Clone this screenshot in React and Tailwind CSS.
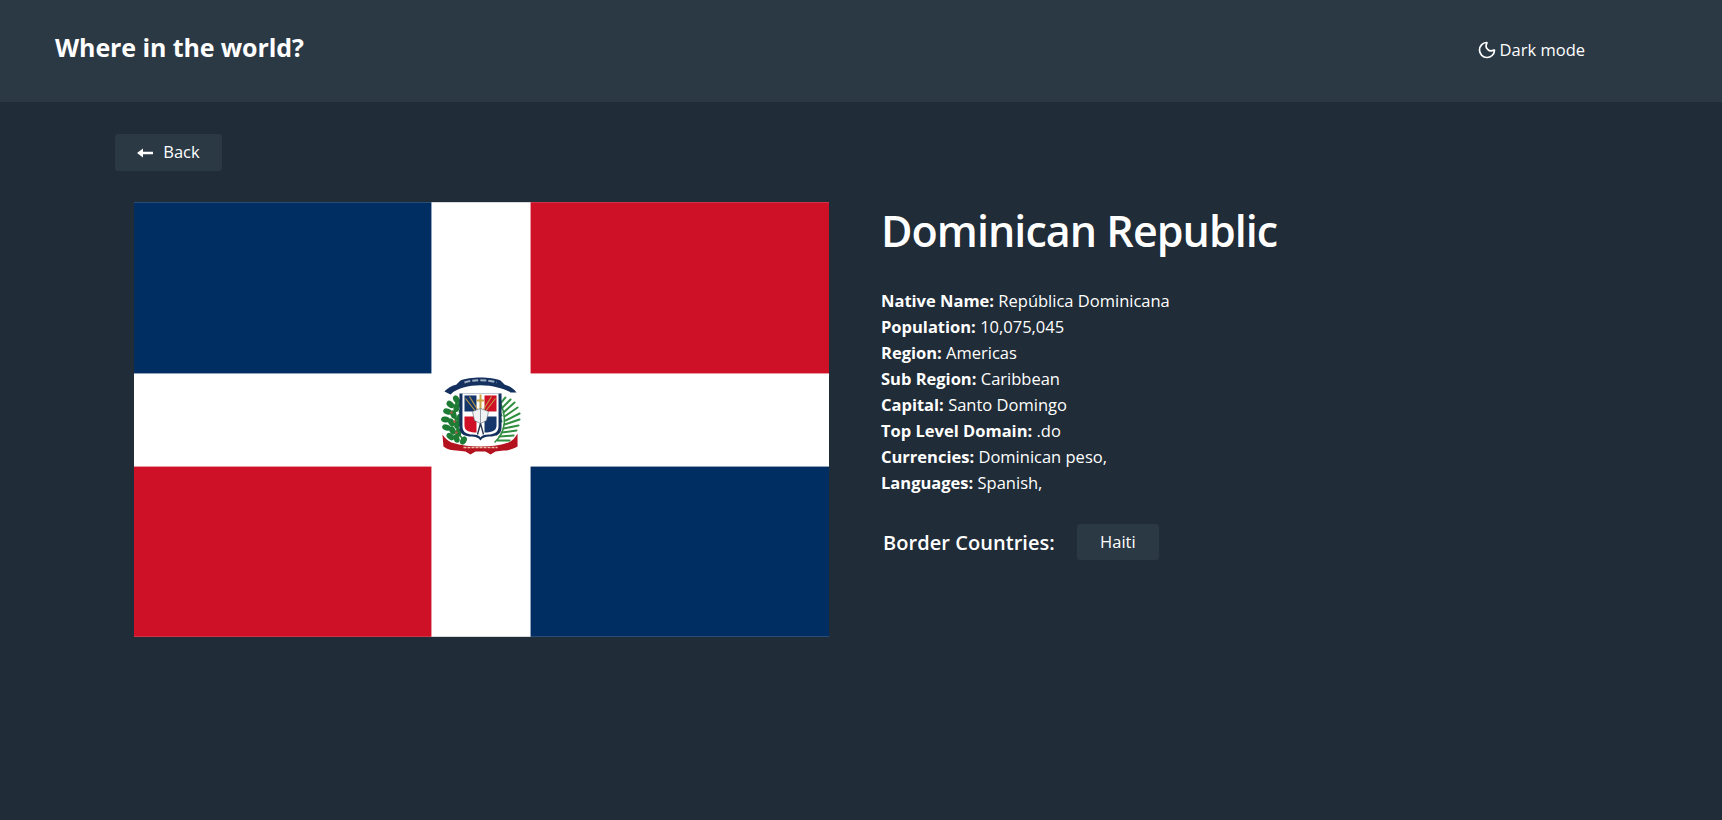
import { Moon } from 'lucide-react';

const DETAILS = [
  ['Native Name:', 'República Dominicana'],
  ['Population:', '10,075,045'],
  ['Region:', 'Americas'],
  ['Sub Region:', 'Caribbean'],
  ['Capital:', 'Santo Domingo'],
  ['Top Level Domain:', '.do'],
  ['Currencies:', 'Dominican peso,'],
  ['Languages:', 'Spanish,'],
];

// leaf positions on the left branch of the coat of arms: x, y, angle
const LAUREL = [
  [17, 25, -30], [22, 29, 30], [11, 30, -50], [17, 33, 10], [23, 36, 40],
  [8, 37, -70], [14, 40, -20], [20, 43, 30], [6, 45, -80], [12, 48, -30],
  [18, 50, 20], [7, 53, -70], [13, 56, -30], [19, 58, 10], [11, 62, -50], [17, 64, -20], [24, 66, 30],
];

// fronds on the right branch: start on the stem, end on the outside
const PALM = [
  [58, 66, 70, 66], [60, 62, 74, 61], [62, 58, 77, 56], [64, 54, 79, 51], [65, 50, 80, 45],
  [66, 46, 80, 39], [65, 42, 78, 33], [64, 38, 75, 28], [62, 34, 71, 25], [60, 30, 66, 23],
  [57, 60, 56, 48], [60, 54, 57, 42], [62, 47, 57, 36], [62, 41, 56, 31],
];

function Flag() {
  return (
    <svg viewBox="0 0 694 434" className="block w-[695px] h-[435px] shrink-0">
      <rect width="694" height="434" fill="#fff" />
      <rect width="297" height="171" fill="#002d62" />
      <rect x="396" width="298" height="171" fill="#ce1126" />
      <rect y="264" width="297" height="170" fill="#ce1126" />
      <rect x="396" y="264" width="298" height="170" fill="#002d62" />
      {/* coat of arms */}
      <g transform="translate(305 172)">
        {/* top ribbon */}
        <path d="M5 17 C10 12 14 11 17 10 L21 6 C30 2 52 2 61 6 L65 10 C68 11 73 13 77 18 L71 18 C67 15 62 14 58 13 C48 10 34 10 24 13 C20 14 15 16 11 20 Z" fill="#14305e" />
        <path d="M25 8 C34 5 48 5 57 8" stroke="#9fb0c4" strokeWidth="2" strokeDasharray="6 2" fill="none" />

        {/* laurel branch */}
        <path d="M26 68 C16 58 13 42 18 24" stroke="#2c7a34" strokeWidth="1.5" fill="none" />
        {LAUREL.map(([x, y, a]) => (
          <ellipse key={`${x}-${y}`} cx={x} cy={y} rx="3" ry="4.4" fill="#1e7b34" transform={`rotate(${a} ${x} ${y})`} />
        ))}
        <circle cx="15" cy="47" r="1.2" fill="#b5584a" />
        <circle cx="17" cy="58" r="1.2" fill="#b5584a" />
        <circle cx="12" cy="38" r="1.2" fill="#b5584a" />

        {/* palm branch */}
        <path d="M55 68 C66 58 69 42 58 23" stroke="#2f8a3c" strokeWidth="1.5" fill="none" />
        {PALM.map(([x1, y1, x2, y2]) => (
          <line key={`${x2}-${y2}`} x1={x1} y1={y1} x2={x2} y2={y2} stroke="#2f8f3e" strokeWidth="2" strokeLinecap="round" />
        ))}

        {/* shield */}
        <path d="M20 19 L62 19 L62 53 C62 60 56 62 50 62 C46 62 43 63 41 66 C39 63 36 62 32 62 C26 62 20 60 20 53 Z" fill="#14305e" />
        <path d="M23 19 L59 19 L59 52 C59 58 54 60 49 60 C45 60 42 61 41 63 C40 61 37 60 33 60 C28 60 23 58 23 52 Z" fill="#fff" />
        <path d="M25 21 L37 21 L37 37 L25 37 Z" fill="#14366b" />
        <path d="M45 21 L57 21 L57 37 L45 37 Z" fill="#ce1126" />
        <path d="M25 42 L37 42 L37 58 C31 58 25 57 25 51 Z" fill="#ce1126" />
        <path d="M45 42 L57 42 L57 51 C57 57 51 58 45 58 Z" fill="#14366b" />
        {/* cross and spears */}
        <path d="M40 20 L42 20 L42 25 L45 25 L45 27 L42 27 L42 35 L40 35 L40 27 L37 27 L37 25 L40 25 Z" fill="#c9a544" />
        <path d="M26 24 L37 38 M30 22 L38 35 M56 24 L45 38 M52 22 L44 35" stroke="#c19a45" strokeWidth="1.1" />
        {/* open book */}
        <path d="M33 37 L41 34 L49 37 L47 46 L41 49 L35 46 Z" fill="#f1f2f4" stroke="#59616d" strokeWidth="0.6" />
        <path d="M41 34 L41 49" stroke="#59616d" strokeWidth="0.6" />
        <path d="M41 49 L38 60 M41 49 L44 60" stroke="#26364f" strokeWidth="1.4" />

        {/* bottom ribbon */}
        <path d="M3 60 C6 64 8 66 12 68 C22 71 32 72 41 72 C50 72 60 71 69 68 C73 66 75 64 78 59 L78 72 C73 75 68 76 64 76 L56 77 L51 80 L46 77 L36 77 L31 80 L26 77 L17 76 C13 76 8 75 4 72 Z" fill="#b5121f" />
        <path d="M24 73 L58 73" stroke="#e9c0a8" strokeWidth="1.4" strokeDasharray="3 1" />
      </g>
    </svg>
  );
}

export default function App() {
  return (
    <div className="min-h-[820px] bg-[#202c37] text-white font-['Open_Sans','Noto_Sans',sans-serif]">
      {/* Header */}
      <header className="h-[102px] bg-[#2b3945] flex justify-between items-start pl-[55px] pr-[137px] pt-[29px]">
        <h1 className="text-[25px] leading-[36px] font-bold tracking-[-0.1px]">Where in the world?</h1>
        <button className="flex items-center gap-[3px] mt-[9px] text-[16.5px] leading-[24px]">
          <Moon size={20} strokeWidth={2} />
          Dark mode
        </button>
      </header>

      <main className="pl-[115px] pt-[32px]">
        <button className="w-[107px] h-[37px] bg-[#2b3945] rounded-[3px] flex items-center justify-center gap-[10px] text-[16.5px]">
          <svg width="16" height="10" viewBox="0 0 16 10" fill="#fff">
            <path d="M0 5 L6 0.5 L6 3.8 L16 3.8 L16 6.2 L6 6.2 L6 9.5 Z" />
          </svg>
          Back
        </button>

        <div className="flex ml-[19px] mt-[31px]">
          <Flag />
          <div className="ml-[52px]">
            <h2 className="text-[43px] leading-[60px] font-semibold -mt-[1px] tracking-[-0.95px]">Dominican Republic</h2>
            <div className="mt-[27px] text-[16.5px] leading-[26px]">
              {DETAILS.map(([label, value]) => (
                <p key={label}>
                  <span className="font-bold">{label}</span> {value}
                </p>
              ))}
            </div>
            <div className="flex items-center mt-[27px]">
              <span className="ml-[2px] mt-[2px] text-[20px] leading-[36px] font-semibold tracking-[0.05px]">Border Countries:</span>
              <span className="ml-[22px] w-[82px] h-[36px] bg-[#2b3945] rounded-[3px] flex items-center justify-center text-[16.5px]">Haiti</span>
            </div>
          </div>
        </div>
      </main>
    </div>
  );
}
